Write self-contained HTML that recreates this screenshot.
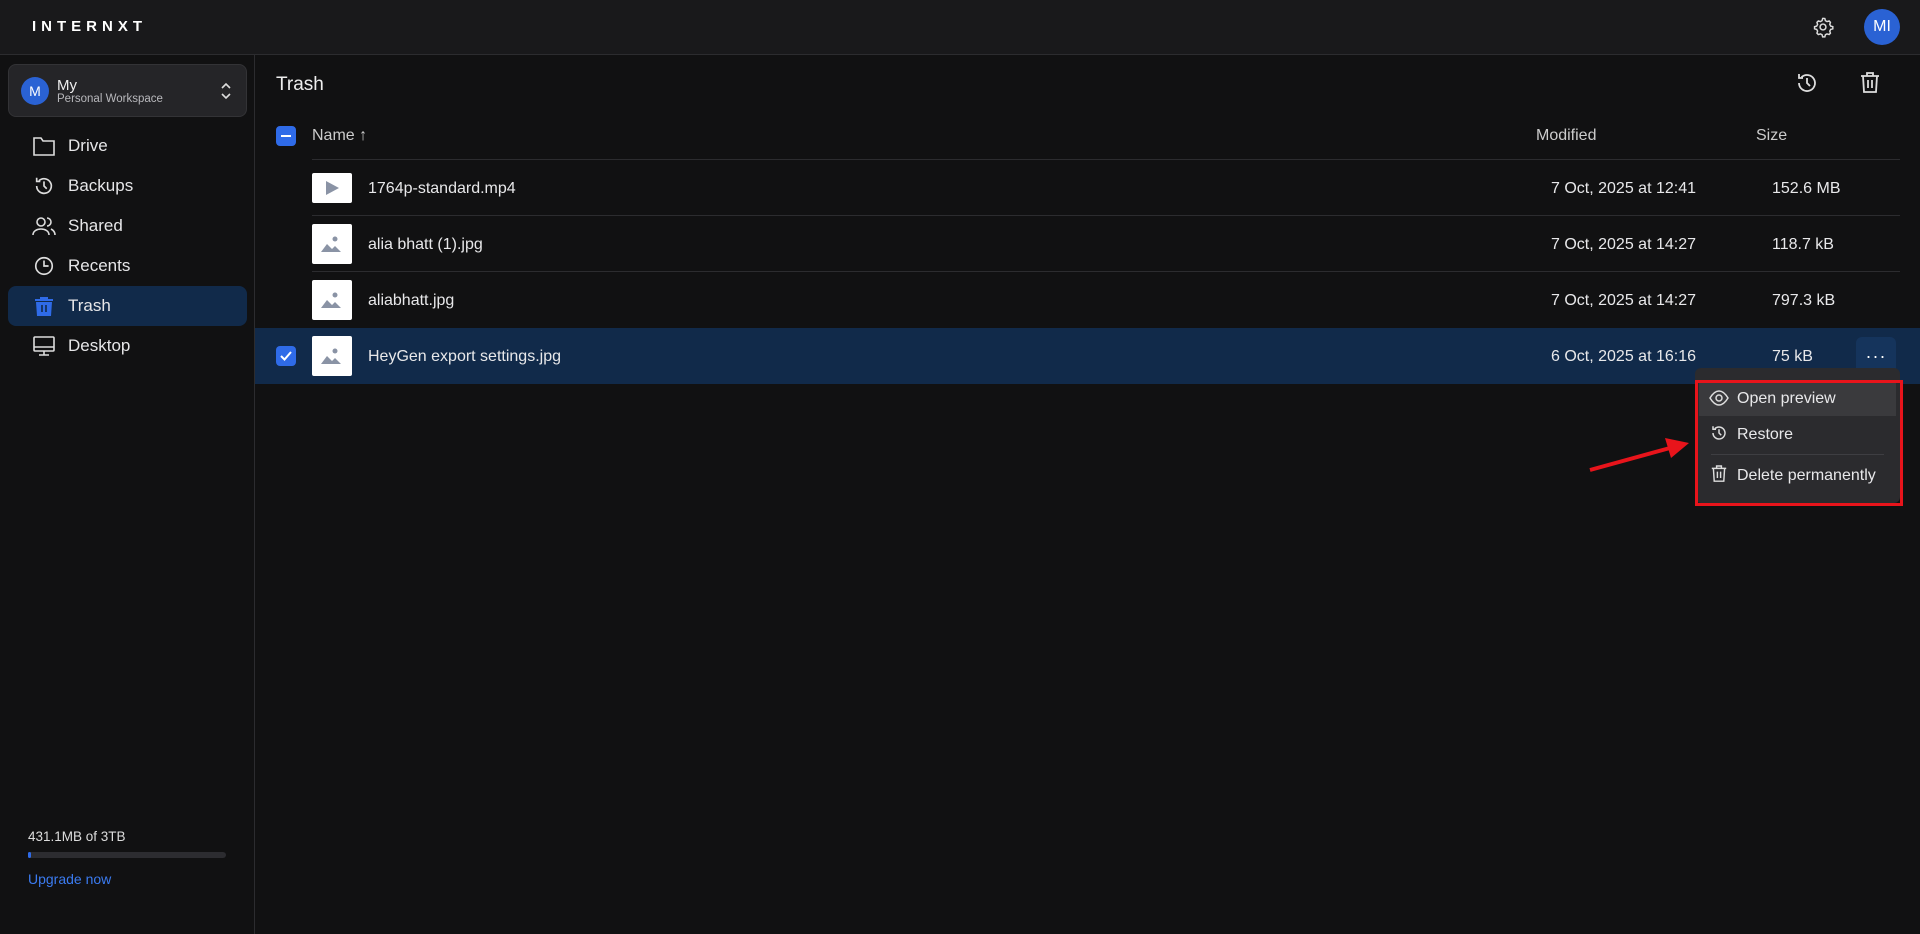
<!DOCTYPE html>
<html><head><meta charset="utf-8"><style>
*{margin:0;padding:0;box-sizing:border-box}
body{width:1920px;height:934px;background:#111112;font-family:"Liberation Sans",sans-serif;color:#e8e8ea;position:relative;overflow:hidden}
.abs{position:absolute}
.hdr{left:0;top:0;width:1920px;height:55px;background:#19191b;border-bottom:1px solid #2c2c2f}
.side{left:0;top:55px;width:255px;height:879px;border-right:1px solid #2c2c2f}
.nav{left:8px;width:239px;height:40px;font-size:17px;color:#e6e6e8;display:flex;align-items:center;padding-left:24px;border-radius:8px}
.nav svg{margin-right:12px}
.t{font-size:16px;color:#e8e8ea;white-space:nowrap}
.sep{left:312px;width:1588px;height:1px;background:#2c2c2f}
.thumb{left:312px;width:40px;height:40px;background:#fff;border-radius:2px}
</style></head><body>
<div class="abs hdr"></div>
<div class="abs" style="left:32px;top:18px;font-size:15px;font-weight:bold;letter-spacing:5px;color:#fff">INTERNXT</div>
<svg class="abs" style="left:1812px;top:16px" width="22" height="22" viewBox="0 0 24 24" fill="none" stroke="#ddd" stroke-width="1.6"><circle cx="12" cy="12" r="3.2"/><path d="M12 2.5l2 .3.6 2.3 1.8 1 2.3-.7 1.4 1.5-.7 2.3 1 1.8 2.3.6v2.4l-2.3.6-1 1.8.7 2.3-1.4 1.5-2.3-.7-1.8 1-.6 2.300h-2.4l-.6-2.3-1.8-1-2.3.7-1.5-1.5.7-2.3-1-1.8-2.3-.6v-2.4l2.3-.6 1-1.8-.7-2.3 1.5-1.5 2.3.7 1.8-1 .6-2.3z"/></svg>
<div class="abs" style="left:1864px;top:9px;width:36px;height:36px;border-radius:50%;background:#2a62d4;color:#fff;font-size:16px;display:flex;align-items:center;justify-content:center">MI</div>

<div class="abs side"></div>
<div class="abs" style="left:8px;top:64px;width:239px;height:53px;background:#252528;border:1px solid #333336;border-radius:8px"></div>
<div class="abs" style="left:21px;top:77px;width:28px;height:28px;border-radius:50%;background:#2a62d4;color:#fff;font-size:14px;display:flex;align-items:center;justify-content:center">M</div>
<div class="abs" style="left:57px;top:77px;font-size:15px;color:#eee">My</div>
<div class="abs" style="left:57px;top:93px;font-size:11.5px;color:#b8b8bc">Personal Workspace</div>
<svg class="abs" style="left:219px;top:82px" width="14" height="18" viewBox="0 0 14 18" fill="none" stroke="#ddd" stroke-width="1.6"><path d="M3 6l4-4 4 4M3 12l4 4 4-4"/></svg>

<div class="abs nav" style="top:126px"><svg width="24" height="22" viewBox="0 0 24 22" fill="none" stroke="#ddd" stroke-width="1.6"><path d="M2 3h7l2 3h11v14H2z"/></svg>Drive</div>
<div class="abs nav" style="top:166px"><svg width="24" height="22" viewBox="0 0 24 24" fill="none" stroke="#ddd" stroke-width="1.8"><path d="M4 12a8 8 0 1 0 2.5-5.8M4 3v4h4M12 7v5l3 3"/></svg>Backups</div>
<div class="abs nav" style="top:206px"><svg width="24" height="22" viewBox="0 0 24 22" fill="none" stroke="#ddd" stroke-width="1.6"><circle cx="9" cy="7" r="4"/><path d="M1 20c0-4 4-6 8-6s8 2 8 6M15 3a4 4 0 0 1 0 8M19 14c2 1 4 3 4 6"/></svg>Shared</div>
<div class="abs nav" style="top:246px"><svg width="24" height="22" viewBox="0 0 24 24" fill="none" stroke="#ddd" stroke-width="1.8"><circle cx="12" cy="12" r="9"/><path d="M12 6v6h5"/></svg>Recents</div>
<div class="abs nav" style="top:286px;background:#112a4a"><svg width="24" height="24" viewBox="0 0 24 24"><path d="M8 3h8v2h5v2H3V5h5z M4 8h16l-1 14H5z" fill="#2f6be8"/><path d="M10 11v7M14 11v7" stroke="#112a4a" stroke-width="1.6"/></svg>Trash</div>
<div class="abs nav" style="top:326px"><svg width="24" height="22" viewBox="0 0 24 22" fill="none" stroke="#ddd" stroke-width="1.6"><rect x="2" y="2" width="20" height="14" rx="1"/><path d="M2 12h20M12 16v4M7 20h10"/></svg>Desktop</div>

<div class="abs" style="left:28px;top:829px;font-size:13.5px;color:#ddd">431.1MB of 3TB</div>
<div class="abs" style="left:28px;top:852px;width:198px;height:6px;border-radius:3px;background:#2c2c30"><div style="width:3px;height:6px;background:#2f6be8;border-radius:3px"></div></div>
<div class="abs" style="left:28px;top:871px;font-size:14px;color:#3b7bf0">Upgrade now</div>

<div class="abs" style="left:276px;top:74px;font-size:19px;color:#eee">Trash</div>
<svg class="abs" style="left:1795px;top:71px" width="24" height="24" viewBox="0 0 24 24" fill="none" stroke="#ddd" stroke-width="1.8"><path d="M4 12a8 8 0 1 0 2.5-5.8M4 3v4h4M12 7v5l3 3"/></svg>
<svg class="abs" style="left:1860px;top:72px" width="20" height="22" viewBox="0 0 20 22" fill="none" stroke="#ddd" stroke-width="1.8"><path d="M1 4h18M7 4V1h6v3M3 4l1 16h12l1-16M8 8v8M12 8v8"/></svg>

<div class="abs" style="left:276px;top:126px;width:20px;height:20px;border-radius:4px;background:#2f6be8"><div style="position:absolute;left:5px;top:9px;width:10px;height:2px;background:#fff"></div></div>
<div class="abs t" style="left:312px;top:127px;color:#ccc">Name ↑</div>
<div class="abs t" style="left:1536px;top:127px;color:#ccc">Modified</div>
<div class="abs t" style="left:1756px;top:127px;color:#ccc">Size</div>
<div class="abs sep" style="top:159px"></div>

<div class="abs" style="left:312px;top:173px;width:40px;height:30px;background:#fff;border-radius:2px"><svg style="position:absolute;left:13px;top:8px" width="14" height="14" viewBox="0 0 14 14"><path d="M1 0l13 7-13 7z" fill="#8a93a5"/></svg></div>
<div class="abs t" style="left:368px;top:180px">1764p-standard.mp4</div>
<div class="abs t" style="left:1551px;top:180px">7 Oct, 2025 at 12:41</div>
<div class="abs t" style="left:1772px;top:180px">152.6 MB</div>
<div class="abs sep" style="top:215px"></div>

<div class="abs" style="left:255px;top:328px;width:1665px;height:56px;background:#112a4a"></div>

<div class="abs thumb" style="top:224px"><svg style="position:absolute;left:9px;top:12px" width="22" height="16" viewBox="0 0 22 16"><circle cx="14" cy="3" r="2.5" fill="#8a93a5"/><path d="M0 16l6-8 5 5 3-3 6 6z" fill="#8a93a5"/></svg></div>
<div class="abs t" style="left:368px;top:236px">alia bhatt (1).jpg</div>
<div class="abs t" style="left:1551px;top:236px">7 Oct, 2025 at 14:27</div>
<div class="abs t" style="left:1772px;top:236px">118.7 kB</div>
<div class="abs sep" style="top:271px"></div>

<div class="abs thumb" style="top:280px"><svg style="position:absolute;left:9px;top:12px" width="22" height="16" viewBox="0 0 22 16"><circle cx="14" cy="3" r="2.5" fill="#8a93a5"/><path d="M0 16l6-8 5 5 3-3 6 6z" fill="#8a93a5"/></svg></div>
<div class="abs t" style="left:368px;top:292px">aliabhatt.jpg</div>
<div class="abs t" style="left:1551px;top:292px">7 Oct, 2025 at 14:27</div>
<div class="abs t" style="left:1772px;top:292px">797.3 kB</div>

<div class="abs" style="left:276px;top:346px;width:20px;height:20px;border-radius:4px;background:#2f6be8"><svg style="position:absolute;left:4px;top:4px" width="12" height="12" viewBox="0 0 12 12" fill="none" stroke="#fff" stroke-width="2"><path d="M1 6l3.5 3.5L11 2"/></svg></div>
<div class="abs thumb" style="top:336px"><svg style="position:absolute;left:9px;top:12px" width="22" height="16" viewBox="0 0 22 16"><circle cx="14" cy="3" r="2.5" fill="#8a93a5"/><path d="M0 16l6-8 5 5 3-3 6 6z" fill="#8a93a5"/></svg></div>
<div class="abs t" style="left:368px;top:348px">HeyGen export settings.jpg</div>
<div class="abs t" style="left:1551px;top:348px">6 Oct, 2025 at 16:16</div>
<div class="abs t" style="left:1772px;top:348px">75 kB</div>
<div class="abs" style="left:1856px;top:337px;width:40px;height:38px;border-radius:6px;background:#15345c;color:#fff;font-size:18px;text-align:center;line-height:38px;letter-spacing:1px">···</div>

<div class="abs" style="left:1695px;top:368px;width:205px;height:135px;background:#2b2b2e;border-radius:6px"></div>
<div class="abs" style="left:1699px;top:381px;width:197px;height:35px;background:#3a3a3d"></div>
<div class="abs" style="left:1695px;top:380px;width:208px;height:126px;border:3px solid #e8141b"></div>
<svg class="abs" style="left:1709px;top:390px" width="20" height="16" viewBox="0 0 20 16" fill="none" stroke="#ddd" stroke-width="1.5"><path d="M1 8c3-5 6-7 9-7s6 2 9 7c-3 5-6 7-9 7s-6-2-9-7z"/><circle cx="10" cy="8" r="3"/></svg>
<div class="abs t" style="left:1737px;top:390px">Open preview</div>
<svg class="abs" style="left:1710px;top:424px" width="18" height="18" viewBox="0 0 24 24" fill="none" stroke="#ddd" stroke-width="2"><path d="M4 12a8 8 0 1 0 2.5-5.8M4 3v4h4M12 7v5l3 3"/></svg>
<div class="abs t" style="left:1737px;top:426px">Restore</div>
<div class="abs" style="left:1711px;top:454px;width:173px;height:1px;background:#3e3e42"></div>
<svg class="abs" style="left:1711px;top:465px" width="16" height="18" viewBox="0 0 20 22" fill="none" stroke="#ddd" stroke-width="1.8"><path d="M1 4h18M7 4V1h6v3M3 4l1 16h12l1-16M8 8v8M12 8v8"/></svg>
<div class="abs t" style="left:1737px;top:467px">Delete permanently</div>

<svg class="abs" style="left:1585px;top:430px" width="110" height="50" viewBox="0 0 110 50"><path d="M5 40L85 18" stroke="#e8141b" stroke-width="4"/><path d="M104 13L80 8l6 20z" fill="#e8141b"/></svg>
</body></html>
